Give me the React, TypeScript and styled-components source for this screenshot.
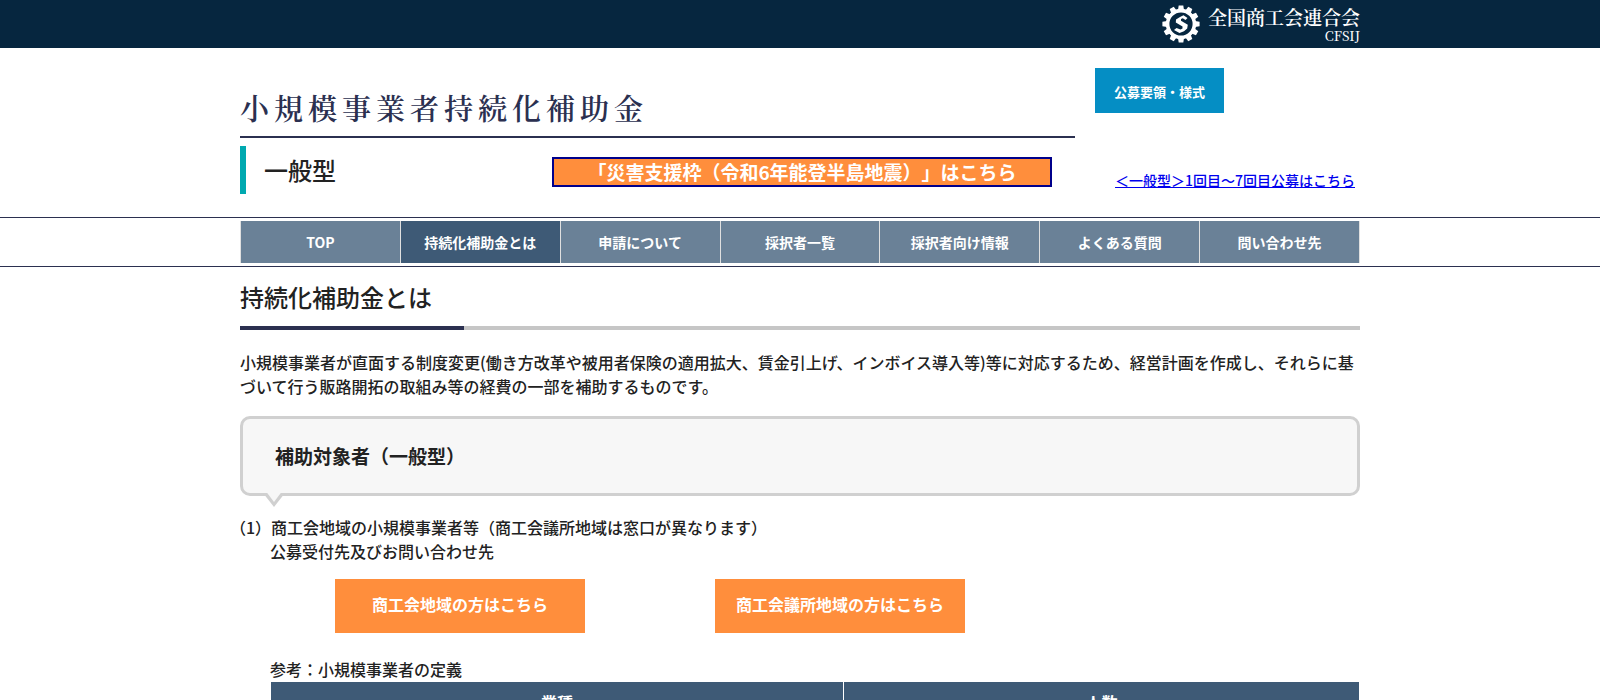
import React from 'react';
import styled, { createGlobalStyle } from 'styled-components';

const sans = `'Noto Sans CJK JP', sans-serif`;
const serif = `'Noto Serif CJK JP', 'Liberation Serif', 'Noto Sans CJK JP', serif`;

const GlobalStyle = createGlobalStyle`
  *, *::before, *::after { box-sizing: border-box; }
  html { overflow-x: hidden; scrollbar-width: none; }
  body {
    margin: 0;
    background: #fff;
    color: #222;
    font: 500 16px/24px ${sans};
  }
  h1, h2, h3, p, ul { margin: 0; padding: 0; }
`;

const Container = styled.div`
  width: 100%;
  max-width: 1120px;
  margin: 0 auto;
`;

const TopBar = styled.div`
  background: #06263f;
`;

const TopBarInner = styled(Container)`
  display: flex;
  justify-content: flex-end;
  align-items: center;
  height: 48px;
`;

const Logo = styled.a`
  display: flex;
  align-items: center;
  gap: 8px;
  color: #fff;
  text-decoration: none;
`;

const LogoText = styled.span`
  display: flex;
  flex-direction: column;
  align-items: flex-end;
  font-family: ${serif};
`;

const LogoName = styled.span`
  font-size: 19px;
  font-weight: 600;
  line-height: 24px;
`;

const LogoSub = styled.span`
  font-size: 13px;
  font-weight: 500;
  line-height: 14px;
`;

const Masthead = styled(Container)`
  display: flex;
  justify-content: space-between;
  padding-bottom: 23px;
`;

const Brand = styled.div`
  flex: 1;
  max-width: 835px;
`;

const SiteTitle = styled.h1`
  height: 90px;
  padding-top: 38px;
  border-bottom: 2px solid #2b3050;
  color: #2b3050;
  font: 600 29px/44px ${serif};
  letter-spacing: 5px;
`;

const TypeRow = styled.div`
  display: flex;
  align-items: center;
  justify-content: space-between;
  margin-top: 8px;
  padding-right: 23px;
`;

const TypeName = styled.h2`
  padding-left: 18px;
  border-left: 6px solid #00a9b0;
  font-size: 24px;
  font-weight: 500;
  line-height: 48px;
`;

const Notice = styled.a`
  width: 500px;
  margin-top: 4px;
  border: 2px solid #00008b;
  background: #ff8e3c;
  color: #fff;
  font-size: 19px;
  font-weight: 700;
  line-height: 26px;
  text-align: center;
  text-decoration: none;
  text-spacing-trim: space-all;
`;

const Aside = styled.div`
  display: flex;
  flex-direction: column;
  justify-content: space-between;
  width: 265px;
  padding: 20px 0 2px;
`;

const GuideLink = styled.a`
  align-self: flex-start;
  padding: 3px 19px 0;
  background: #058ec4;
  color: #fff;
  font-size: 13px;
  font-weight: 700;
  line-height: 42px;
  text-decoration: none;
`;

const PastLink = styled.a`
  align-self: flex-end;
  margin-right: 5px;
  color: #0000ee;
  font-size: 14px;
`;

const NavBar = styled.nav`
  padding: 3px 0;
  border: solid #2b3050;
  border-width: 1px 0;
`;

const NavList = styled.ul`
  display: grid;
  grid-template-columns: repeat(7, 1fr);
  width: 100%;
  max-width: 1120px;
  margin: 0 auto;
  border-right: 1px solid #e0e0e0;
  list-style: none;
`;

const NavLink = styled.a<{ $active?: boolean }>`
  display: block;
  border-left: 1px solid #e0e0e0;
  background: ${({ $active }) => ($active ? '#3e5a76' : '#6a8197')};
  color: #fff;
  font-size: 14px;
  font-weight: 700;
  line-height: 42px;
  text-align: center;
  text-decoration: none;
`;

const PageHeading = styled.h2`
  position: relative;
  padding: 12px 0 11px;
  border-bottom: 4px solid #c6c6c6;
  font-size: 24px;
  font-weight: 500;
  line-height: 36px;

  &::after {
    content: '';
    position: absolute;
    left: 0;
    bottom: -4px;
    width: 20%;
    height: 4px;
    background: #2b3050;
  }
`;

const Lead = styled.p`
  margin-top: 20px;
`;

const Balloon = styled.h3`
  position: relative;
  margin-top: 18px;
  padding: 24px 32px;
  border: 3px solid #d0d0d0;
  border-radius: 10px;
  background: #f7f7f7;
  font-size: 19px;
  font-weight: 700;
  line-height: 26px;
  text-spacing-trim: space-all;
`;

const BalloonTail = styled.svg`
  position: absolute;
  left: 20px;
  top: 100%;
`;

const Target = styled.p`
  margin-top: 19px;
  padding-left: 30px;
`;

const Hanging = styled.span`
  display: block;
  margin-left: -40px;
`;

const OfficeLinks = styled.div`
  display: flex;
  gap: 130px;
  margin: 16px 0 24px 95px;
`;

const OfficeLink = styled.a`
  width: 250px;
  padding-bottom: 4px;
  background: #ff8e3c;
  color: #fff;
  font-weight: 700;
  line-height: 50px;
  text-align: center;
  text-decoration: none;
`;

const Definition = styled.div`
  padding-left: 30px;
`;

const DefinitionTable = styled.table`
  width: 100%;
  margin-top: 1px;
  border-collapse: collapse;
`;

const HeadCell = styled.th`
  padding: 8px;
  border: 1px solid #fff;
  border-top: 0;
  background: #3e5a76;
  color: #fff;
  font-weight: 700;
`;

const navItems = [
  'TOP',
  '持続化補助金とは',
  '申請について',
  '採択者一覧',
  '採択者向け情報',
  'よくある質問',
  '問い合わせ先',
];

const teeth = Array.from({ length: 12 }, (_, i) => i * 30);

function Emblem() {
  return (
    <svg width="38" height="38" viewBox="-19 -19 38 38" aria-hidden="true">
      <g fill="#fff">
        {teeth.map((angle) => (
          <path key={angle} d="M-3 -14L-2.3 -18.6H2.3L3 -14Z" transform={`rotate(${angle})`} />
        ))}
      </g>
      <circle r="13.4" fill="none" stroke="#fff" strokeWidth="3.6" />
      <path
        d="M6.5 -6L2.5 -8.8L-1 -7L-5 -4.5L-5.2 -1.5L1.5 2.5V4.5L-0.5 5.6L-4.5 4L-7 6L-1.5 9L3 7.2L6.2 4.5L6.8 0.8L0 -3.2V-5L1.8 -5.8L4.5 -4Z"
        fill="#fff"
      />
    </svg>
  );
}

export default function App() {
  return (
    <>
      <GlobalStyle />
      <TopBar>
        <TopBarInner>
          <Logo href="#">
            <Emblem />
            <LogoText>
              <LogoName>全国商工会連合会</LogoName>
              <LogoSub>CFSIJ</LogoSub>
            </LogoText>
          </Logo>
        </TopBarInner>
      </TopBar>
      <header>
        <Masthead>
          <Brand>
            <SiteTitle>小規模事業者持続化補助金</SiteTitle>
            <TypeRow>
              <TypeName>一般型</TypeName>
              <Notice href="#">「災害支援枠（令和6年能登半島地震）」はこちら</Notice>
            </TypeRow>
          </Brand>
          <Aside>
            <GuideLink href="#">公募要領・様式</GuideLink>
            <PastLink href="#">＜一般型＞1回目～7回目公募はこちら</PastLink>
          </Aside>
        </Masthead>
        <NavBar>
          <NavList>
            {navItems.map((item, i) => (
              <li key={item}>
                <NavLink href="#" $active={i === 1}>
                  {item}
                </NavLink>
              </li>
            ))}
          </NavList>
        </NavBar>
      </header>
      <Container as="main">
        <PageHeading>持続化補助金とは</PageHeading>
        <Lead>
          小規模事業者が直面する制度変更(働き方改革や被用者保険の適用拡大、賃金引上げ、インボイス導入等)等に対応するため、経営計画を作成し、それらに基づいて行う販路開拓の取組み等の経費の一部を補助するものです。
        </Lead>
        <Balloon>
          補助対象者（一般型）
          <BalloonTail width="22" height="14" viewBox="0 0 22 14" aria-hidden="true">
            <path d="M0 0H22L11 14Z" fill="#d0d0d0" />
            <path d="M2 -3H20L11 9Z" fill="#f7f7f7" />
          </BalloonTail>
        </Balloon>
        <Target>
          <Hanging>（1）商工会地域の小規模事業者等（商工会議所地域は窓口が異なります）</Hanging>
          公募受付先及びお問い合わせ先
        </Target>
        <OfficeLinks>
          <OfficeLink href="#">商工会地域の方はこちら</OfficeLink>
          <OfficeLink href="#">商工会議所地域の方はこちら</OfficeLink>
        </OfficeLinks>
        <Definition>
          <p>参考：小規模事業者の定義</p>
          <DefinitionTable>
            <colgroup>
              <col width="573" />
              <col />
            </colgroup>
            <thead>
              <tr>
                <HeadCell scope="col">業種</HeadCell>
                <HeadCell scope="col">人数</HeadCell>
              </tr>
            </thead>
          </DefinitionTable>
        </Definition>
      </Container>
    </>
  );
}
